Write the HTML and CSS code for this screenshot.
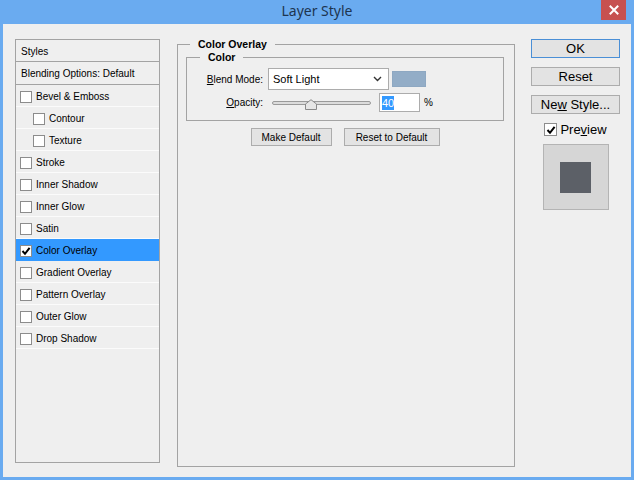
FILE: index.html
```html
<!DOCTYPE html>
<html>
<head>
<meta charset="utf-8">
<title>Layer Style</title>
<link rel="stylesheet" href="styles.css">
</head>
<body>
<div class="window">
  <div class="titlebar">
    <span class="tb-spacer"></span>
    <span class="title">Layer Style</span>
    <span class="close"><svg width="10" height="10" viewBox="0 0 10 10"><path d="M1.5 1.5L8.5 8.5M8.5 1.5L1.5 8.5" stroke="#fff" stroke-width="2" stroke-linecap="square"/></svg></span>
  </div>
  <div class="frame">
    <div class="styles-panel">
      <div class="hdr">Styles</div>
      <div class="hdr">Blending Options: Default</div>
      <div class="row"><span class="cb"></span><span>Bevel &amp; Emboss</span></div>
      <div class="row sub"><span class="cb"></span><span>Contour</span></div>
      <div class="row sub"><span class="cb"></span><span>Texture</span></div>
      <div class="row"><span class="cb"></span><span>Stroke</span></div>
      <div class="row"><span class="cb"></span><span>Inner Shadow</span></div>
      <div class="row"><span class="cb"></span><span>Inner Glow</span></div>
      <div class="row"><span class="cb"></span><span>Satin</span></div>
      <div class="row sel"><span class="cb"><svg width="10" height="10" viewBox="0 0 10 10"><path d="M1.5 5L4 7.8L8.6 1.8" fill="none" stroke="#000" stroke-width="2"/></svg></span><span>Color Overlay</span></div>
      <div class="row"><span class="cb"></span><span>Gradient Overlay</span></div>
      <div class="row"><span class="cb"></span><span>Pattern Overlay</span></div>
      <div class="row"><span class="cb"></span><span>Outer Glow</span></div>
      <div class="row"><span class="cb"></span><span>Drop Shadow</span></div>
    </div>

    <fieldset class="group">
      <legend>Color Overlay</legend>
      <fieldset class="inner">
        <legend>Color</legend>
        <div class="frow">
          <span class="lbl"><u>B</u>lend Mode:</span>
          <span class="select"><span>Soft Light</span><svg class="chev" width="9" height="6" viewBox="0 0 9 6"><path d="M1 1L4.5 4.5L8 1" fill="none" stroke="#333" stroke-width="1.4"/></svg></span>
          <span class="swatch"></span>
        </div>
        <div class="frow op">
          <span class="lbl"><u>O</u>pacity:</span>
          <span class="slider"><span class="track"></span><svg class="knob" width="12" height="11" viewBox="0 0 12 11"><path d="M0.5 10.5V5L6 0.7L11.5 5V10.5Z" fill="#e6e6e6" stroke="#8a8a8a"/></svg></span>
          <span class="num"><span class="hl">40</span></span>
          <span class="pct">%</span>
        </div>
      </fieldset>
      <div class="btnrow">
        <span class="btn w1">Make Default</span>
        <span class="btn w2">Reset to Default</span>
      </div>
    </fieldset>

    <div class="side">
      <span class="bigbtn default"><span>OK</span></span>
      <span class="bigbtn"><span>Reset</span></span>
      <span class="bigbtn"><span>Ne<u>w</u> Style...</span></span>
      <div class="preview"><span class="cb"><svg width="10" height="10" viewBox="0 0 10 10"><path d="M1.5 5L4 7.8L8.6 1.8" fill="none" stroke="#000" stroke-width="2"/></svg></span><span>Pre<u>v</u>iew</span></div>
      <div class="thumb"><div class="thumb-sq"></div></div>
    </div>
  </div>
</div>
</body>
</html>
```

FILE: styles.css
```css
* { box-sizing: border-box; }
html, body { margin: 0; padding: 0; }
body {
  width: 634px;
  height: 480px;
  overflow: hidden;
  font-family: "Liberation Sans", Arial, sans-serif;
  font-size: 10px;
  color: #000;
}
.window {
  width: 634px;
  height: 480px;
  background: #6aabf0;
  display: flex;
  flex-direction: column;
}
.titlebar {
  height: 24px;
  display: grid;
  grid-template-columns: 1fr auto 1fr;
  align-items: start;
}
.title {
  font-family: "Noto Sans", "Open Sans", sans-serif;
  font-size: 14px;
  line-height: 22px;
  color: #1d3550;
}
.close {
  justify-self: end;
  margin-right: 8px;
  width: 25px;
  height: 20px;
  background: #c75150;
  display: flex;
  align-items: center;
  justify-content: center;
}
.frame {
  flex: 1;
  margin: 0 3px 3px 3px;
  background: #efefef;
  display: flex;
  align-items: flex-start;
  padding: 15px 0 0 12px;
}

/* left list */
.styles-panel {
  width: 145px;
  height: 424px;
  border: 1px solid #a3a3a3;
}
.hdr {
  height: 22px;
  line-height: 21px;
  padding: 1px 0 0 5px;
  border-bottom: 1px solid #a3a3a3;
}
.hdr + .hdr { height: 23px; line-height: 22px; }
.row {
  height: 22px;
  display: flex;
  align-items: center;
  padding: 2px 0 0 4px;
  border-bottom: 1px solid #fbfbfb;
}
.row.sub { padding-left: 17px; }
.row.sel { background: #3399ff; border-bottom-color: #3399ff; }
.cb {
  width: 12px;
  height: 12px;
  border: 1px solid #8c8c8c;
  background: #fff;
  margin-right: 4px;
  display: flex;
  align-items: center;
  justify-content: center;
  flex: none;
}

/* middle group */
fieldset { margin: 0; min-width: 0; }
.group {
  margin-left: 17px;
  margin-top: -2px;
  width: 338px;
  height: 430px;
  border: 1px solid #a3a3a3;
  padding: 0 10px 0 8px;
}
legend {
  font-weight: bold;
  font-size: 10.5px;
  line-height: 14px;
  padding: 0 8px;
}
.group > legend { margin-left: 4px; }
.inner {
  margin-top: -1px;
  border: 1px solid #a3a3a3;
  padding: 0 0 8px 0;
}
.inner > legend { margin-left: 13px; }
.frow {
  display: flex;
  align-items: center;
  margin-top: 4px;
  height: 22px;
}
.frow.op { margin-top: 3px; height: 19px; }
.lbl {
  width: 76px;
  text-align: right;
  flex: none;
}
.select {
  margin-left: 5px;
  width: 121px;
  height: 22px;
  border: 1px solid #acacac;
  background: #fff;
  display: flex;
  align-items: center;
  justify-content: space-between;
  padding: 0 6px 0 4px;
  font-size: 11px;
}
.swatch {
  margin-left: 3px;
  width: 34px;
  height: 16px;
  background: #93adc7;
  border: 1px solid #8ea8c2;
}
.slider {
  margin-left: 9px;
  width: 99px;
  height: 19px;
  display: flex;
  align-items: center;
  position: relative;
}
.track {
  width: 99px;
  height: 4px;
  border: 1px solid #9a9a9a;
  border-radius: 2px;
  background: #dcdcdc;
}
.knob {
  position: absolute;
  left: 33px;
  top: 6px;
}
.num {
  margin-left: 8px;
  width: 41px;
  height: 19px;
  border: 1px solid #acacac;
  background: #fff;
  display: flex;
  align-items: center;
  padding-left: 2px;
  font-size: 11px;
}
.hl {
  background: #3399ff;
  color: #fff;
  line-height: 14px;
}
.pct { margin-left: 4px; }
.btnrow {
  display: flex;
  justify-content: center;
  gap: 12px;
  margin-top: 7px;
}
.btn {
  height: 18px;
  border: 1px solid #acacac;
  background: #e3e3e3;
  display: flex;
  align-items: center;
  justify-content: center;
}
.w1 { width: 81px; }
.w2 { width: 96px; }

/* right column */
.side {
  margin-left: 16px;
  width: 89px;
  display: flex;
  flex-direction: column;
  align-items: center;
  font-size: 13px;
}
.bigbtn {
  width: 89px;
  height: 19px;
  border: 1px solid #acacac;
  background: #e3e3e3;
  display: flex;
  align-items: center;
  justify-content: center;
  margin-bottom: 9px;
}
.bigbtn.default { border-color: #4a8fd6; }
.preview {
  display: flex;
  align-items: center;
  height: 13px;
}
.preview .cb { width: 13px; height: 13px; margin-right: 3px; }
.thumb {
  margin-top: 8px;
  width: 66px;
  height: 66px;
  border: 1px solid #b4b4b4;
  background: #d6d6d6;
  display: flex;
  align-items: center;
  justify-content: center;
}
.thumb-sq {
  width: 31px;
  height: 31px;
  background: #5c6067;
}
```
